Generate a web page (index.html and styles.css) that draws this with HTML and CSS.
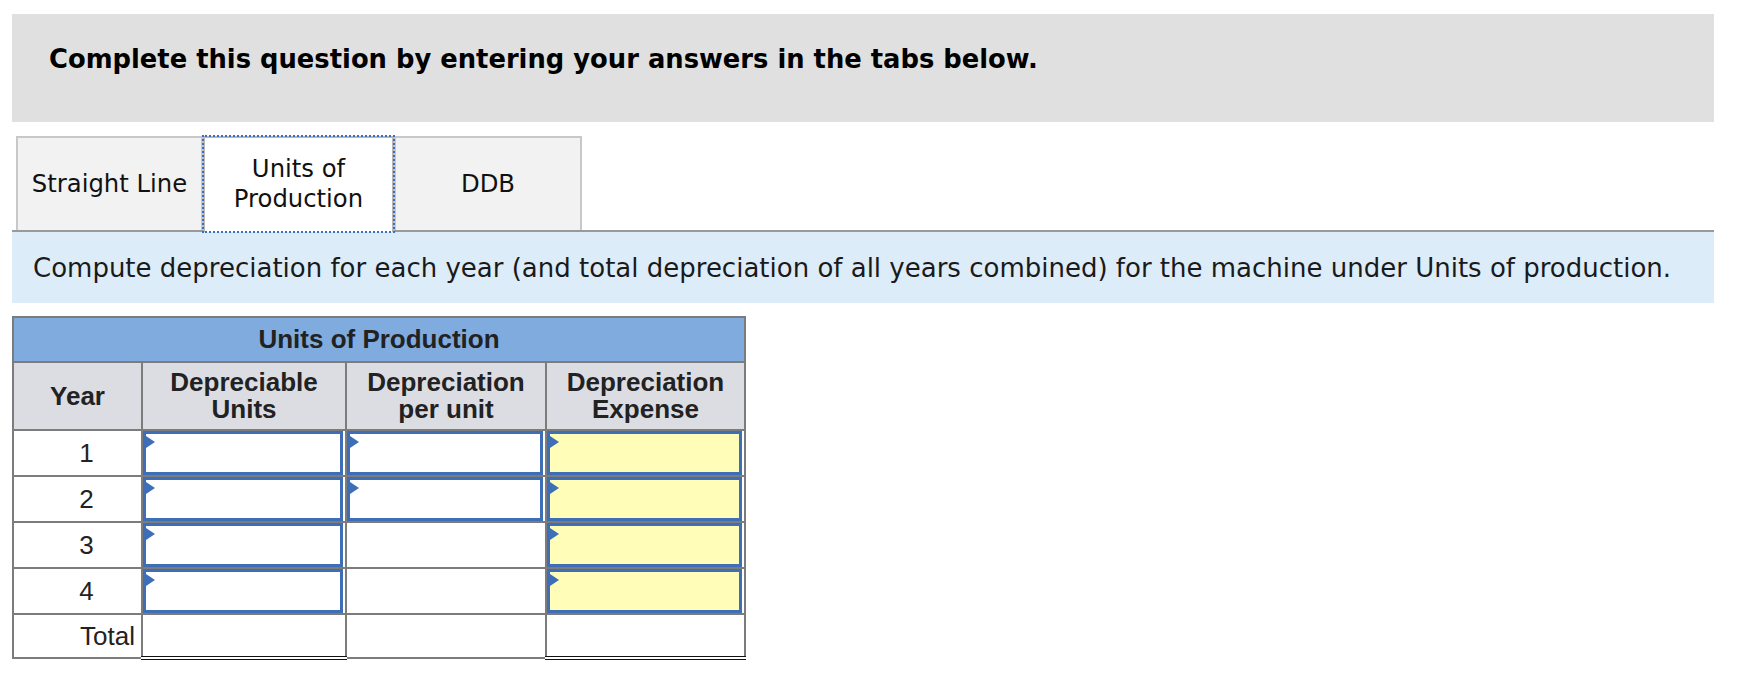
FILE: index.html
```html
<!DOCTYPE html>
<html>
<head>
<meta charset="utf-8">
<link rel="stylesheet" href="styles.css">
</head>
<body>
<div class="page">
  <div class="banner">Complete this question by entering your answers in the tabs below.</div>
  <div class="tabs">
    <div class="tab">Straight Line</div>
    <div class="tab active">Units of<br>Production</div>
    <div class="tab">DDB</div>
  </div>
  <div class="instr">Compute depreciation for each year (and total depreciation of all years combined) for the machine under Units of production.</div>
  <table class="grid">
    <colgroup>
      <col class="c-year"><col class="c-units"><col class="c-per"><col class="c-exp">
    </colgroup>
    <thead>
      <tr class="h1"><th colspan="4">Units of Production</th></tr>
      <tr class="h2"><th>Year</th><th>Depreciable<br>Units</th><th>Depreciation<br>per unit</th><th>Depreciation<br>Expense</th></tr>
    </thead>
    <tbody>
      <tr><td class="yr">1</td><td class="in"><div class="box"></div></td><td class="in"><div class="box"></div></td><td class="in"><div class="box calc"></div></td></tr>
      <tr><td class="yr">2</td><td class="in"><div class="box"></div></td><td class="in"><div class="box"></div></td><td class="in"><div class="box calc"></div></td></tr>
      <tr><td class="yr">3</td><td class="in"><div class="box"></div></td><td></td><td class="in"><div class="box calc"></div></td></tr>
      <tr><td class="yr">4</td><td class="in"><div class="box"></div></td><td></td><td class="in"><div class="box calc"></div></td></tr>
      <tr class="total"><td class="tl">Total</td><td class="tot"></td><td></td><td class="tot"></td></tr>
    </tbody>
  </table>
</div>
</body>
</html>
```
FILE: styles.css
```css
html, body { margin: 0; padding: 0; background: #ffffff; }
.page { padding: 14px 0 0 12px; width: 1702px; font-family: "DejaVu Sans", Verdana, sans-serif; color: #111; }
.banner { height: 108px; box-sizing: border-box; background: #e0e0e0; padding: 30px 0 0 37px; font-weight: bold; font-size: 25.8px; line-height: 30px; color: #000; }
.tabs { display: flex; margin-top: 14px; padding-left: 4px; border-bottom: 2px solid #9a9a9a; }
.tab { box-sizing: border-box; height: 94px; width: 187px; display: flex; align-items: center; justify-content: center; text-align: center; background: #f2f2f2; border: 2px solid #c8c8c8; border-bottom: none; font-size: 24.3px; line-height: 30px; color: #111; }
.tab.active { width: 191px; background: #ffffff; border: 2px solid #b8b8b8; border-bottom: none; outline: 2px dotted #3a6ec0; outline-offset: -1px; position: relative; z-index: 1; height: 96px; margin-bottom: -2px; padding-bottom: 2px; }
.tab:last-child { width: 188px; }
.instr { height: 71px; box-sizing: border-box; background: #ddecf9; display: flex; align-items: center; padding-left: 21px; font-size: 26px; color: #1a1a1a; }
.grid { margin-top: 13px; border-collapse: collapse; table-layout: fixed; width: 732px; font-family: "Liberation Sans", Arial, sans-serif; color: #222; border: 2px solid #7c7c7c; }
.c-year { width: 129px; } .c-units { width: 204px; } .c-per { width: 200px; } .c-exp { width: 199px; }
.grid th, .grid td { border: 2px solid #7c7c7c; padding: 0; }
.h1 th { height: 43px; background: #7fabdf; font-size: 26px; font-weight: bold; }
.h2 th { height: 66px; background: #dcdde2; font-size: 26px; font-weight: bold; line-height: 27px; }
.grid tbody td { height: 44px; background: #ffffff; }
.yr { text-align: center; font-size: 26px; padding-left: 18px !important; }
.tl { text-align: right; font-size: 26px; padding-right: 6px !important; }
.in { padding: 0; vertical-align: top; }
.box { position: relative; box-sizing: border-box; height: 44px; width: calc(100% - 2px); border: 3px solid #3e6fb6; background: #ffffff; }
.box.calc { background: #fffdb8; }
.box::before { content: ""; position: absolute; left: 0; top: 2px; border-left: 9px solid #3e6fb6; border-top: 6px solid transparent; border-bottom: 6px solid transparent; }
.grid tbody .total td { height: 41px; }
.total td.tot { border-top: 2px solid #111; border-bottom: 4px double #111; }
```
